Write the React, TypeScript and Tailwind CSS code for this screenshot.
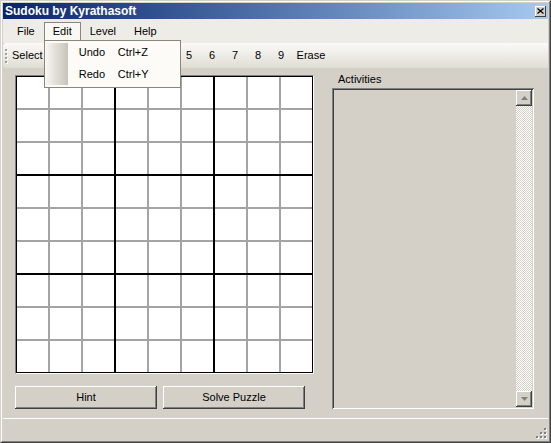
import React from 'react';

const raised =
  'shadow-[inset_-1px_-1px_#404040,inset_1px_1px_#ffffff,inset_-2px_-2px_#808080,inset_2px_2px_#d4d0c8]';

export default function App() {
  return (
    <div className="w-[551px] h-[443px] bg-[#d4d0c8] font-['Liberation_Sans',Arial,sans-serif] text-[11px] text-black border border-t-[#d4d0c8] border-l-[#d4d0c8] border-r-[#404040] border-b-[#404040]">
      <div className="h-full flex flex-col border border-t-white border-l-white border-r-[#808080] border-b-[#808080] p-px">
        {/* Title bar */}
        <div className="h-[16px] flex items-center justify-between pl-[2px] pr-[2px] bg-gradient-to-r from-[#0a246a] to-[#a6caf0]">
          <span className="text-white font-bold text-[12px] leading-none">Sudoku by Kyrathasoft</span>
          <div className="w-[11px] h-[11px] bg-[#d4d0c8] flex items-center justify-center shadow-[inset_-1px_-1px_#404040,inset_1px_1px_#ffffff]">
            <svg width="7" height="6" viewBox="0 0 7 6">
              <path d="M0.5 0.5L6.5 5.5M6.5 0.5L0.5 5.5" stroke="#000" strokeWidth="1.2" />
            </svg>
          </div>
        </div>

        <MenuBar />
        <ToolBar />

        {/* Main */}
        <div className="flex-1 flex gap-[18px] pl-[12px]">
          <div className="flex flex-col pt-[7px]">
            <SudokuGrid />
            <div className="flex gap-[6px] mt-[12px]">
              <button className={`w-[142px] h-[23px] bg-[#d4d0c8] ${raised}`}>Hint</button>
              <button className={`w-[142px] h-[23px] bg-[#d4d0c8] ${raised}`}>Solve Puzzle</button>
            </div>
          </div>
          <div className="flex flex-col pt-[5px]">
            <div className="pl-[6px] h-[13px] leading-[13px]">Activities</div>
            <div className="mt-[2px] w-[202px] h-[321px] flex justify-end p-[2px] shadow-[inset_1px_1px_#808080,inset_-1px_-1px_#ffffff,inset_2px_2px_#404040,inset_-2px_-2px_#d4d0c8]">
              <Scrollbar />
            </div>
          </div>
        </div>

        {/* Status bar */}
        <div className="h-[22px] border-t border-white flex justify-end items-end pr-px pb-px">
          <svg width="12" height="12" viewBox="0 0 12 12">
            {[
              [9, 1],
              [5, 5],
              [9, 5],
              [1, 9],
              [5, 9],
              [9, 9],
            ].map(([x, y]) => (
              <g key={`${x}-${y}`}>
                <rect x={x + 1} y={y + 1} width="2" height="2" fill="#ffffff" />
                <rect x={x} y={y} width="2" height="2" fill="#808080" />
              </g>
            ))}
          </svg>
        </div>
      </div>
    </div>
  );
}

function MenuBar() {
  return (
    <div className="h-[24px] bg-[#eeece6] flex items-center pl-[5px]">
      <div className="h-[19px] flex items-center px-[9px]">File</div>
      <div className="relative h-[19px] flex items-center px-[8px] border border-b-0 border-[#8a867a] bg-[#f9f8f4]">
        Edit
        {/* open Edit menu */}
        <div className="absolute left-[-1px] top-[17px] z-10 w-[137px] h-[48px] border border-[#8a867a] bg-[#fcfbf8] flex py-px">
          <div className="w-[23px] my-px bg-gradient-to-r from-[#f9f8f5] to-[#c6c3b9]" />
          <div className="flex flex-col pl-[11px]">
            <div className="h-[22px] flex items-center">
              <span className="w-[39px]">Undo</span>
              <span>Ctrl+Z</span>
            </div>
            <div className="h-[22px] flex items-center">
              <span className="w-[39px]">Redo</span>
              <span>Ctrl+Y</span>
            </div>
          </div>
        </div>
      </div>
      <div className="h-[19px] flex items-center px-[9px]">Level</div>
      <div className="h-[19px] flex items-center px-[9px]">Help</div>
    </div>
  );
}

function ToolBar() {
  return (
    <div className="h-[25px] bg-gradient-to-b from-[#fbfaf8] to-[#e0ddd4] rounded-l-[3px] flex items-center">
      <div className="ml-[2px] flex flex-col gap-[2px]">
        {[0, 1, 2, 3].map((i) => (
          <div key={i} className="w-[2px] h-[2px] bg-[#a19e94] shadow-[1px_1px_#ffffff]" />
        ))}
      </div>
      <span className="ml-[5px]">Select</span>
      {/* buttons 1-4 sit under the open menu */}
      <div className="ml-[43px] w-[92px]" />
      <div className="flex">
        {['5', '6', '7', '8', '9'].map((d) => (
          <span key={d} className="w-[23px] text-center">
            {d}
          </span>
        ))}
      </div>
      <span className="ml-[4px]">Erase</span>
    </div>
  );
}

function SudokuGrid() {
  const nine = [0, 1, 2, 3, 4, 5, 6, 7, 8];
  return (
    <div className="w-fit border border-t-[#808080] border-l-[#808080] border-r-white border-b-white">
      <div className="grid grid-cols-3 gap-[2px] bg-black p-px">
        {nine.map((b) => (
          <div key={b} className="grid grid-cols-3 gap-[2px] bg-[#a4a4a4]">
            {nine.map((c) => (
              <div key={c} className="w-[31px] h-[31px] bg-white" />
            ))}
          </div>
        ))}
      </div>
    </div>
  );
}

function Scrollbar() {
  return (
    <div className="w-[16px] h-full flex flex-col bg-[repeating-conic-gradient(#ffffff_0%_25%,#d4d0c8_0%_50%)] bg-[length:2px_2px]">
      <div className={`w-[16px] h-[16px] bg-[#d4d0c8] flex items-center justify-center ${raised}`}>
        <svg width="7" height="5" viewBox="0 0 7 5">
          <polygon points="3.5,0 7,4 0,4" fill="#808080" />
        </svg>
      </div>
      <div className="flex-1" />
      <div className={`w-[16px] h-[16px] bg-[#d4d0c8] flex items-center justify-center ${raised}`}>
        <svg width="7" height="5" viewBox="0 0 7 5">
          <polygon points="0,0 7,0 3.5,4" fill="#808080" />
        </svg>
      </div>
    </div>
  );
}
